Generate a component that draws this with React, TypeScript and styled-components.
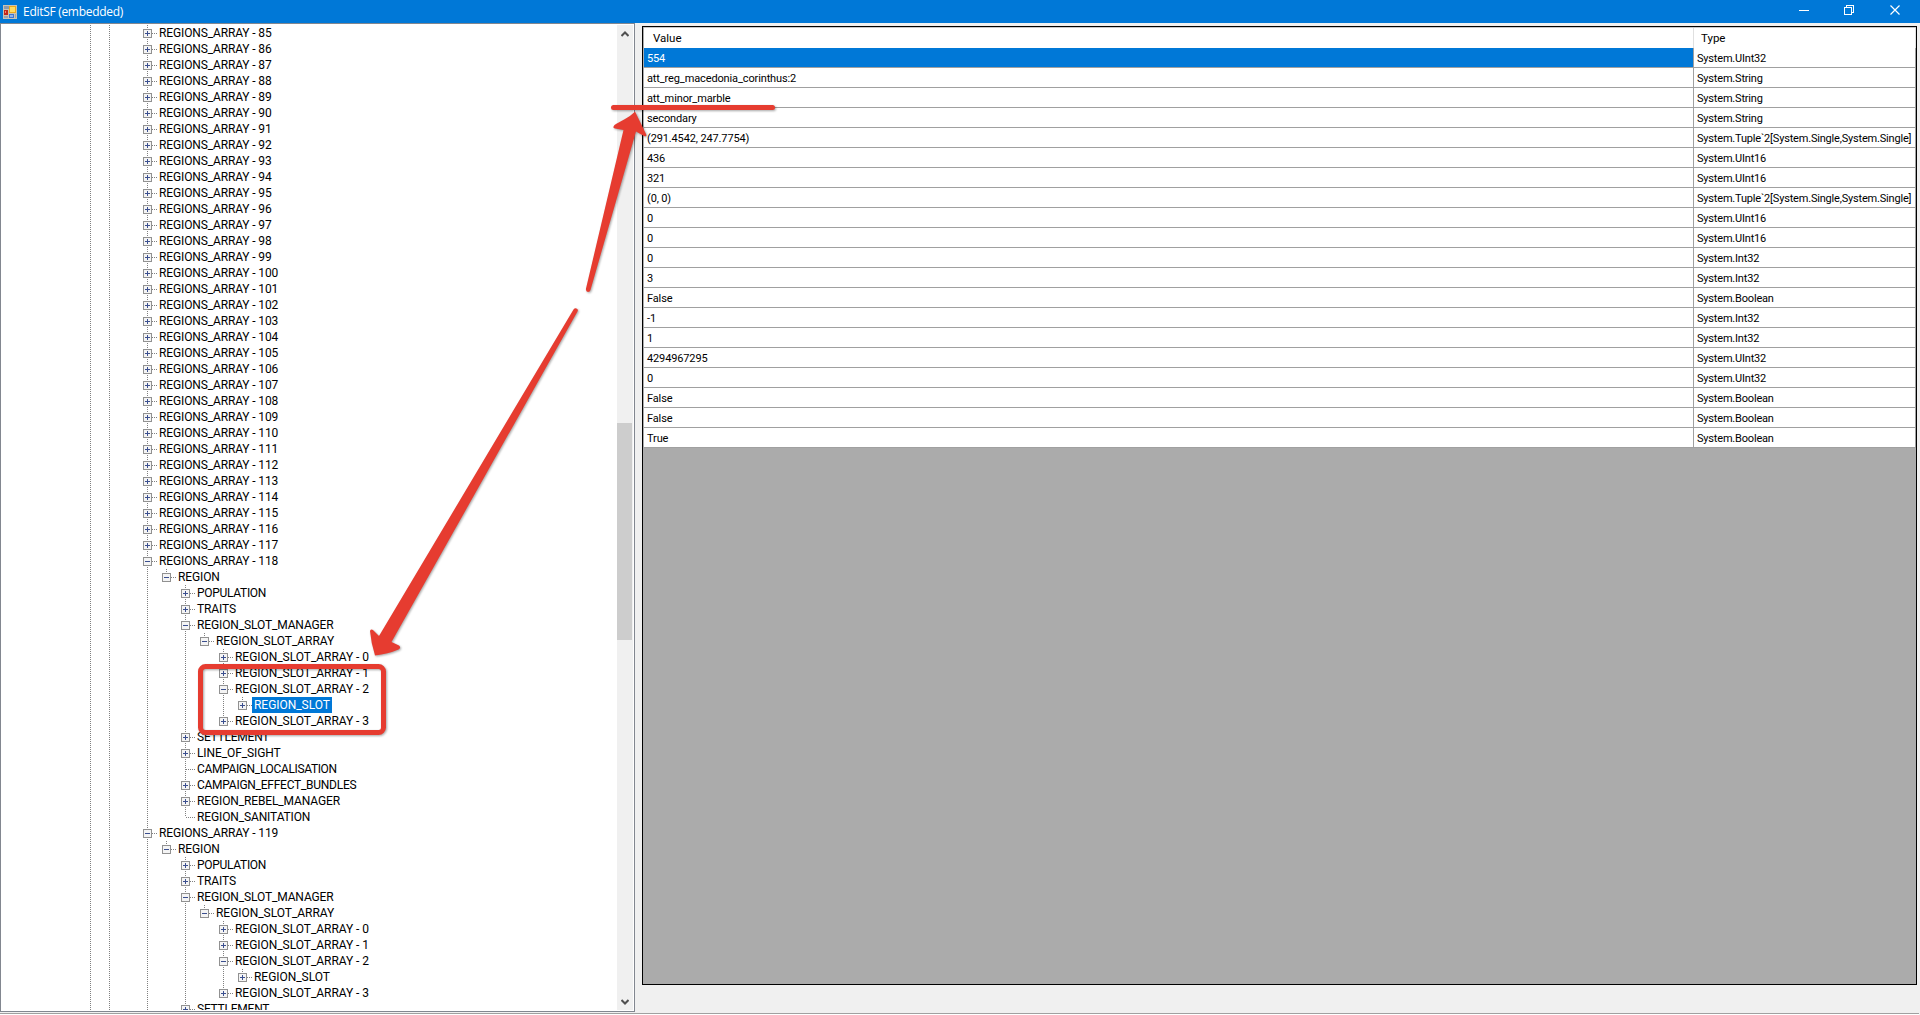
import React from 'react';
import { createGlobalStyle, styled } from 'styled-components';

interface TreeNode {
  label: string;
  level: number;
  state: 'plus' | 'minus' | 'leaf';
  // vertical guides drawn to the left of the node, by level
  guides: number[];
  last?: boolean;
  selected?: boolean;
  tracking?: number;
}

const INDENT = 19;

const array = (n: number, state: 'plus' | 'minus' = 'plus'): TreeNode => ({
  label: `REGIONS_ARRAY - ${n}`,
  level: 3,
  state,
  guides: [0, 1],
});

const slots = (selected: boolean): TreeNode[] => {
  const guides = [0, 1, 3, 5];
  return [
    { label: 'REGION', level: 4, state: 'minus', guides: [0, 1, 3], last: true },
    { label: 'POPULATION', level: 5, state: 'plus', guides: [0, 1, 3], tracking: -0.3 },
    { label: 'TRAITS', level: 5, state: 'plus', guides: [0, 1, 3] },
    { label: 'REGION_SLOT_MANAGER', level: 5, state: 'minus', guides: [0, 1, 3] },
    { label: 'REGION_SLOT_ARRAY', level: 6, state: 'minus', guides, last: true, tracking: -0.04 },
    { label: 'REGION_SLOT_ARRAY - 0', level: 7, state: 'plus', guides, tracking: -0.04 },
    { label: 'REGION_SLOT_ARRAY - 1', level: 7, state: 'plus', guides, tracking: -0.04 },
    { label: 'REGION_SLOT_ARRAY - 2', level: 7, state: 'minus', guides, tracking: -0.04 },
    { label: 'REGION_SLOT', level: 8, state: 'plus', guides: [...guides, 7], last: true, selected, tracking: -0.04 },
    { label: 'REGION_SLOT_ARRAY - 3', level: 7, state: 'plus', guides, last: true, tracking: -0.04 },
    { label: 'SETTLEMENT', level: 5, state: 'plus', guides: [0, 1, 3], tracking: -0.24 },
  ];
};

const nodes: TreeNode[] = [
  ...Array.from({ length: 33 }, (_, i) => array(85 + i)),
  array(118, 'minus'),
  ...slots(true),
  { label: 'LINE_OF_SIGHT', level: 5, state: 'plus', guides: [0, 1, 3], tracking: -0.1 },
  { label: 'CAMPAIGN_LOCALISATION', level: 5, state: 'leaf', guides: [0, 1, 3], tracking: -0.36 },
  { label: 'CAMPAIGN_EFFECT_BUNDLES', level: 5, state: 'plus', guides: [0, 1, 3], tracking: -0.26 },
  { label: 'REGION_REBEL_MANAGER', level: 5, state: 'plus', guides: [0, 1, 3] },
  { label: 'REGION_SANITATION', level: 5, state: 'leaf', guides: [0, 1, 3], last: true },
  array(119, 'minus'),
  ...slots(false),
];

const TUPLE = 'System.Tuple`2[System.Single,System.Single]';

const values: [string, string][] = [
  ['554', 'System.UInt32'],
  ['att_reg_macedonia_corinthus:2', 'System.String'],
  ['att_minor_marble', 'System.String'],
  ['secondary', 'System.String'],
  ['(291.4542, 247.7754)', TUPLE],
  ['436', 'System.UInt16'],
  ['321', 'System.UInt16'],
  ['(0, 0)', TUPLE],
  ['0', 'System.UInt16'],
  ['0', 'System.UInt16'],
  ['0', 'System.Int32'],
  ['3', 'System.Int32'],
  ['False', 'System.Boolean'],
  ['-1', 'System.Int32'],
  ['1', 'System.Int32'],
  ['4294967295', 'System.UInt32'],
  ['0', 'System.UInt32'],
  ['False', 'System.Boolean'],
  ['False', 'System.Boolean'],
  ['True', 'System.Boolean'],
];

function AppIcon() {
  return (
    <svg width="14" height="14" viewBox="0 0 14 14" shapeRendering="crispEdges">
      <rect width="14" height="14" fill="#c9c3b4" />
      <rect x="1" y="1" width="5" height="3" fill="#8d99ab" />
      <rect x="1" y="5" width="4" height="5" fill="#c3281c" />
      <rect x="2" y="6" width="1" height="2" fill="#ef8a72" />
      <rect x="6" y="1" width="7" height="7" fill="#e9a91d" />
      <rect x="7" y="2" width="5" height="5" fill="#ffdc62" />
      <rect x="1" y="11" width="4" height="2" fill="#9aa3b0" />
      <rect x="6" y="9" width="5" height="4" fill="#3f74d0" />
      <rect x="7" y="10" width="3" height="2" fill="#8ab4f2" />
      <rect x="12" y="9" width="1" height="4" fill="#9aa3b0" />
    </svg>
  );
}

function Expander({ node }: { node: TreeNode }) {
  const { state, last } = node;
  return (
    <ExpanderBox width="19" height="16" viewBox="0 0 19 16" shapeRendering="crispEdges">
      <path d={last ? 'M9.5 0V8' : 'M9.5 0V16'} stroke="#808080" strokeDasharray="1 1" />
      <path d="M10 8.5H19" stroke="#808080" strokeDasharray="1 1" />
      {state !== 'leaf' && (
        <>
          <rect x="5.5" y="4.5" width="8" height="8" fill="#f4f4f4" stroke="#919191" />
          <path d="M7 8.5H12" stroke="#3b4f8f" />
          {state === 'plus' && <path d="M9.5 6V11" stroke="#3b4f8f" />}
        </>
      )}
    </ExpanderBox>
  );
}

function TreeRow({ node }: { node: TreeNode }) {
  return (
    <Row>
      {Array.from({ length: node.level }, (_, i) => (
        <Guide key={i} $line={node.guides.includes(i)} />
      ))}
      <Expander node={node} />
      <Label $selected={node.selected} $tracking={node.tracking}>
        {node.label}
      </Label>
    </Row>
  );
}

function Annotations() {
  return (
    <Overlay width="1920" height="1015" viewBox="0 0 1920 1015">
      <g fill="#e63c30">
        <path d="M635 111.5C629 118 619 122 614.5 125Q612 128 615 128.5L623.5 130L586 288.5Q585.5 291.5 588 292Q590 292 590.5 290L636 131.5L644 136Q647.5 137 646 134Z" />
        <path d="M375 655.5Q371 643 370 631Q371 628.5 373.5 630.5L379 636L573.5 309.5Q575 307.5 577 308.7Q578.5 310 577.5 311.5L391.5 642L399 645.5Q401.5 648 398.5 649.5Q388 654 375 655.5Z" />
      </g>
      <g fill="none" stroke="#e63c30" strokeWidth="5">
        <path d="M613.5 107.5H772.5" strokeLinecap="round" />
        <rect x="200.5" y="666.5" width="183" height="66" rx="5" />
      </g>
    </Overlay>
  );
}

function App() {
  return (
    <Window>
      <GlobalStyle />
      <TitleBar>
        <AppIcon />
        <Title>EditSF (embedded)</Title>
        <Controls width="140" height="23" viewBox="0 0 140 23" fill="none" stroke="#fff">
          <path d="M19 10.5H29" shapeRendering="crispEdges" />
          <path d="M64.5 7.5H71.5V14.5H64.5ZM66.5 7V5.5H73.5V12.5H72" shapeRendering="crispEdges" />
          <path d="M110.5 5.5L119.5 14.5M119.5 5.5L110.5 14.5" strokeWidth="1.2" />
        </Controls>
      </TitleBar>
      <Content>
        <TreePanel>
          <Tree>
            {nodes.map((node, i) => (
              <TreeRow key={i} node={node} />
            ))}
          </Tree>
          <ScrollBar>
            <Arrow width="8" height="6" viewBox="0 0 8 6">
              <path d="M0.5 5L4 1.5L7.5 5" />
            </Arrow>
            <Thumb />
            <Arrow width="8" height="6" viewBox="0 0 8 6">
              <path d="M0.5 1L4 4.5L7.5 1" />
            </Arrow>
          </ScrollBar>
        </TreePanel>
        <GridPanel>
          <GridHeader>
            <HeaderCell $pad={9}>Value</HeaderCell>
            <HeaderCell $pad={7}>Type</HeaderCell>
          </GridHeader>
          {values.map(([value, type], i) => (
            <GridRow key={i}>
              <Cell $selected={i === 0} $tracking={-0.13}>
                {value}
              </Cell>
              <Cell $tracking={-0.19}>{type}</Cell>
            </GridRow>
          ))}
        </GridPanel>
      </Content>
      <BottomEdge />
      <Annotations />
    </Window>
  );
}

const GlobalStyle = createGlobalStyle`
  * {
    box-sizing: border-box;
  }
  body {
    margin: 0;
    overflow: hidden;
  }
`;

const Window = styled.div`
  position: relative;
  display: flex;
  flex-direction: column;
  width: 1920px;
  height: 1015px;
  overflow: hidden;
  background: #f0f0f0;
  color: #000;
  font-family: Roboto, 'Liberation Sans', sans-serif;
`;

const TitleBar = styled.header`
  display: flex;
  align-items: center;
  height: 23px;
  flex: none;
  padding-left: 3px;
  background: #0078d7;
`;

const Title = styled.span`
  flex: 1;
  padding-left: 6px;
  color: #fff;
  font: 12px/20px 'Open Sans', sans-serif;
  letter-spacing: -0.29px;
`;

const Controls = styled.svg`
  flex: none;
`;

const Content = styled.main`
  display: flex;
  height: 990px;
  flex: none;
`;

const TreePanel = styled.section`
  display: flex;
  width: 635px;
  height: 989px;
  padding: 1px;
  border: 1px solid #828790;
  background: #fff;
`;

const Tree = styled.div`
  flex: 1;
  height: 985px;
  padding-left: 79px;
  overflow: hidden;
`;

const Row = styled.div`
  display: flex;
  height: 16px;
`;

const Guide = styled.span<{ $line: boolean }>`
  width: ${INDENT}px;
  flex: none;
  background: ${({ $line }) =>
    $line ? 'repeating-linear-gradient(#808080 0 1px, transparent 1px 2px) 9px 0 / 1px 16px no-repeat' : 'none'};
`;

const ExpanderBox = styled.svg`
  flex: none;
`;

const Label = styled.span<{ $selected?: boolean; $tracking?: number }>`
  height: 16px;
  padding: 0 2px;
  font-size: 12px;
  line-height: 16px;
  letter-spacing: ${({ $tracking = -0.13 }) => $tracking}px;
  white-space: nowrap;
  color: ${({ $selected }) => ($selected ? '#fff' : '#000')};
  background: ${({ $selected }) => ($selected ? '#0078d7' : 'none')};
`;

const ScrollBar = styled.div`
  display: flex;
  flex-direction: column;
  align-items: center;
  width: 16px;
  height: 985px;
  padding: 6px 1px 5px 0;
  background: #f0f0f0;
`;

const Arrow = styled.svg`
  flex: none;
  fill: none;
  stroke: #505050;
  stroke-width: 2;
`;

const Thumb = styled.div`
  width: 15px;
  height: 217px;
  margin: 386px 0 auto;
  background: #cdcdcd;
`;

const GridPanel = styled.section`
  width: 1275px;
  height: 959px;
  margin: 3px 0 0 7px;
  padding-left: 1px;
  border: 1px solid #000;
  background: #ababab;
`;

const GridHeader = styled.div`
  display: grid;
  grid-template-columns: 1050px 222px;
  height: 21px;
  border-top: 1px solid #c8c8c8;
  border-bottom: 1px solid #a0a0a0;
`;

const HeaderCell = styled.div<{ $pad: number }>`
  padding-left: ${({ $pad }) => $pad}px;
  border-right: 1px solid #e0e0e0;
  background: #fff;
  font-size: 11.5px;
  line-height: 21px;
`;

const GridRow = styled.div`
  display: grid;
  grid-template-columns: 1050px 222px;
  height: 20px;
`;

const Cell = styled.div<{ $selected?: boolean; $tracking: number }>`
  height: 20px;
  padding-left: 3px;
  border-right: 1px solid #a0a0a0;
  border-bottom: 1px solid #a0a0a0;
  font-size: 11px;
  line-height: 21px;
  letter-spacing: ${({ $tracking }) => $tracking}px;
  white-space: nowrap;
  color: ${({ $selected }) => ($selected ? '#fff' : '#000')};
  background: ${({ $selected }) => ($selected ? '#0078d7' : '#fff')};
`;

const BottomEdge = styled.footer`
  width: 1919px;
  height: 2px;
  border-top: 1px solid #a0a0a0;
  background: #fff;
`;

// red markers drawn over both panels
const Overlay = styled.svg`
  position: absolute;
  top: 0;
  left: 0;
  pointer-events: none;
  filter: drop-shadow(1px 1px 1px rgba(0, 0, 0, 0.35));
`;

export default App;
